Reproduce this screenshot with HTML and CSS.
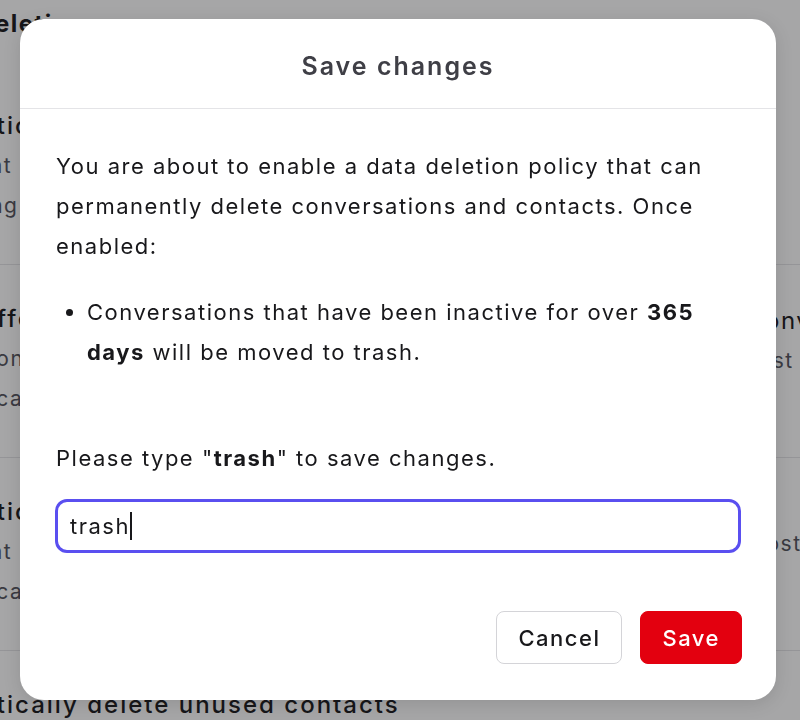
FILE: index.html
```html
<!DOCTYPE html>
<html lang="en">
<head>
<meta charset="utf-8">
<title>Save changes</title>
<link rel="stylesheet" href="styles.css">
</head>
<body>
<div class="page">
  <h1 class="page-title">Data deletion</h1>
  <section class="row">
    <div class="row-main">
      <div class="row-title">Automatically trash inactive conversations</div>
      <div class="row-desc">Chats that have had no activity are moved to trash</div>
      <div class="row-desc">Continuing a trashed conversation restores it</div>
    </div>
  </section>
  <section class="row">
    <div class="row-main">
      <div class="row-title">Set a different period per inbox</div>
      <div class="row-desc">Once a conversation in this inbox</div>
      <div class="row-desc">Automatically applies</div>
    </div>
    <div class="row-side">
      <div class="side-title">Conversations</div>
      <div class="side-desc">Last 365 days</div>
    </div>
  </section>
  <section class="row">
    <div class="row-main">
      <div class="row-title">Automatically delete trashed conversations</div>
      <div class="row-desc">Chats that stay in trash are deleted</div>
      <div class="row-desc">Automatically and permanently</div>
    </div>
    <div class="row-side row-side-low">
      <div class="side-desc">Mostly</div>
    </div>
  </section>
  <section class="row">
    <div class="row-main">
      <div class="row-title">Automatically delete unused contacts</div>
    </div>
  </section>
</div>

<div class="overlay">
  <div class="modal" role="dialog" aria-labelledby="modal-title">
    <header class="modal-header">
      <h2 class="modal-title" id="modal-title">Save changes</h2>
    </header>
    <div class="modal-body">
      <p class="intro">You are about to enable a data deletion policy that can permanently delete conversations and contacts. Once enabled:</p>
      <ul class="effects">
        <li>Conversations that have been inactive for over <strong>365 days</strong> will be moved to trash.</li>
      </ul>
      <p class="confirm-label">Please type "<strong>trash</strong>" to save changes.</p>
      <div class="text-field" role="textbox">trash<span class="caret"></span></div>
    </div>
    <footer class="modal-footer">
      <button class="btn btn-secondary" type="button">Cancel</button>
      <button class="btn btn-danger" type="button">Save</button>
    </footer>
  </div>
</div>
</body>
</html>
```
FILE: styles.css
```css
* { box-sizing: border-box; }

html, body {
  margin: 0;
  height: 100%;
  overflow: hidden;
}

body {
  font-family: Inter, "Noto Sans", sans-serif;
  color: #18181b;
  background: #ffffff;
  letter-spacing: 1.5px;
}

/* Background settings page */
.page {
  margin-left: -104px;
  width: 1000px;
}

.page-title {
  margin: 0;
  height: 72px;
  padding-top: 8px;
  padding-left: 15px;
  font-size: 24px;
  line-height: 32px;
  font-weight: 700;
}

.row {
  display: flex;
  height: 193px;
  padding-top: 34px;
  border-bottom: 1px solid #e4e4e7;
}

.row:last-child { border-bottom: none; }

.row-main { flex: 0 0 850px; }

.row-title {
  font-size: 24px;
  line-height: 40px;
  font-weight: 500;
  letter-spacing: 2px;
  color: #18181b;
  white-space: nowrap;
}

.row-desc {
  font-size: 21px;
  line-height: 40px;
  color: #52525b;
  white-space: nowrap;
}

.row-side { padding-top: 2px; }
.row-side-low { padding-top: 32px; }

.side-title {
  font-size: 24px;
  line-height: 40px;
  color: #18181b;
  white-space: nowrap;
}

.side-desc {
  font-size: 21px;
  line-height: 40px;
  color: #52525b;
  white-space: nowrap;
}

/* Overlay + modal */
.overlay {
  position: fixed;
  inset: 0;
  background: rgba(20, 20, 24, 0.38);
  padding: 19px 24px 20px 20px;
}

.modal {
  width: 756px;
  height: 681px;
  background: #ffffff;
  border-radius: 24px;
  box-shadow: 0 4px 18px rgba(0, 0, 0, 0.12);
  display: flex;
  flex-direction: column;
  overflow: hidden;
}

.modal-header {
  height: 90px;
  border-bottom: 1px solid #e4e4e7;
  display: flex;
  align-items: center;
  justify-content: center;
  padding-top: 4px;
}

.modal-title {
  margin: 0;
  font-size: 25px;
  line-height: 32px;
  font-weight: 600;
  letter-spacing: 2px;
  color: #3f3f46;
}

.modal-body {
  flex: 1;
  padding: 37px 35px 0 36px;
  font-size: 22px;
  line-height: 40px;
  color: #18181b;
}

.intro { margin: 0; }

.effects {
  margin: 26px 0 0;
  padding-left: 31px;
}

.effects strong, .confirm-label strong { font-weight: 700; }

.confirm-label { margin: 66px 0 0; }

.text-field {
  margin: 21px 0 0 -1px;
  height: 54px;
  border: 3px solid #5a4ff0;
  border-radius: 12px;
  padding: 0 12px;
  display: flex;
  align-items: center;
  font-size: 22px;
  color: #18181b;
}

.caret {
  display: inline-block;
  width: 2px;
  height: 28px;
  margin-left: 0;
  background: #18181b;
}

.modal-footer {
  display: flex;
  justify-content: flex-end;
  gap: 18px;
  padding: 0 34px 36px;
}

.btn {
  height: 53px;
  border-radius: 8px;
  font-family: Inter, "Noto Sans", sans-serif;
  font-size: 22px;
  font-weight: 500;
  letter-spacing: 1.5px;
  cursor: pointer;
}

.btn-secondary {
  background: #ffffff;
  border: 1px solid #d4d4d8;
  color: #18181b;
  padding: 0 21px;
}

.btn-danger {
  background: #e3000f;
  border: 1px solid #e3000f;
  color: #ffffff;
  padding: 0 21px;
}
```
